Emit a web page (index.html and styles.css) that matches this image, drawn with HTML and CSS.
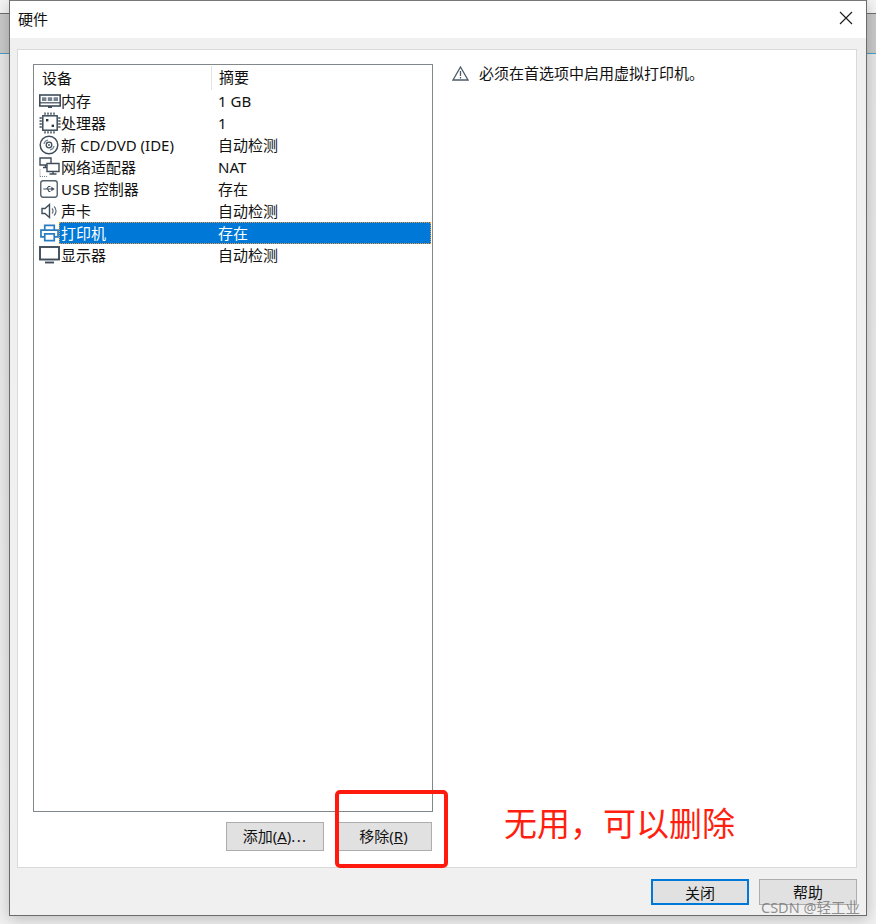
FILE: index.html
```html
<!DOCTYPE html>
<html lang="zh">
<head>
<meta charset="utf-8">
<title>硬件</title>
<link rel="stylesheet" href="styles.css">
</head>
<body>
<div class="window">
  <header class="titlebar">
    <span class="title">硬件</span>
    <svg class="close" width="14" height="14" viewBox="0 0 14 14"><path d="M1 1 L13 13 M13 1 L1 13" stroke="#1a1a1a" stroke-width="1.1" fill="none"/></svg>
  </header>
  <main class="body">
    <section class="panel">
      <div class="left">
        <div class="list">
          <div class="list-head">
            <span class="head-a">设备</span>
            <span class="head-b">摘要</span>
          </div>
          <div class="row">
            <svg class="ico" width="22" height="16" viewBox="0 0 22 16"><rect x="0.800" y="2" width="20.400" height="11" fill="none" stroke="#3f4d5a" stroke-width="1.600"/><path d="M1 9.800h20" stroke="#3f4d5a" stroke-width="1.200"/><path d="M3 4.200h4.400v3.800H3zM8.800 4.200h4.400v3.800H8.800zM14.600 4.200H19v3.800h-4.400z" fill="#75828d"/><path d="M9 13h4v2H9z" fill="#3f4d5a"/></svg>
            <div class="cells"><span class="c1">内存</span><span class="c2">1 GB</span></div>
          </div>
          <div class="row">
            <svg class="ico" width="22" height="22" viewBox="0 0 22 22"><rect x="3.800" y="3.800" width="14.400" height="14.400" fill="none" stroke="#3f4d5a" stroke-width="1.500"/><path d="M6 0.500v2.300M9 0.500v2.300M12 0.500v2.300M15 0.500v2.300M6 19.200v2.300M9 19.200v2.300M12 19.200v2.300M15 19.200v2.300M0.500 6h2.300M0.500 9h2.300M0.500 12h2.300M0.500 15h2.300M19.200 6h2.300M19.200 9h2.300M19.200 12h2.300M19.200 15h2.300" stroke="#3f4d5a" stroke-width="1.400"/><rect x="7" y="7" width="2.400" height="2.400" fill="#2a3742"/><rect x="12.600" y="12.600" width="2.400" height="2.400" fill="#2a3742"/></svg>
            <div class="cells"><span class="c1">处理器</span><span class="c2">1</span></div>
          </div>
          <div class="row">
            <svg class="ico" width="20" height="20" viewBox="0 0 20 20"><g fill="none" stroke="#3f4d5a"><circle cx="10" cy="10" r="8.800" stroke-width="1.500"/><circle cx="10" cy="10" r="2.800" stroke-width="1.300"/><path d="M5 9a5 5 0 0 1 4-4M15 11a5 5 0 0 1-4 4" stroke="#75828d" stroke-width="1.200"/></g><circle cx="10" cy="10" r="0.900" fill="#3f4d5a"/></svg>
            <div class="cells"><span class="c1">新 CD/DVD (IDE)</span><span class="c2">自动检测</span></div>
          </div>
          <div class="row">
            <svg class="ico" width="21" height="21" viewBox="0 0 21 21"><g fill="none" stroke="#3f4d5a" stroke-width="1.400"><path d="M1 1.500h11v7H1zM6.500 8.500v2M4 11h5"/><path d="M8 7h12v8H8z" fill="#fff"/><path d="M14 15v2M10.500 17.500h7"/></g><path d="M1 13v7M1 20h8" stroke="#75828d" stroke-dasharray="1 1" fill="none"/></svg>
            <div class="cells"><span class="c1">网络适配器</span><span class="c2">NAT</span></div>
          </div>
          <div class="row">
            <svg class="ico ico-usb" width="18" height="18" viewBox="0 0 19 19"><rect x="0.800" y="0.800" width="17.400" height="17.400" rx="2.500" fill="none" stroke="#55636f" stroke-width="1.500"/><path d="M3.500 9.500h11M14.500 9.500l-2-1.300v2.600zM7 9.500l2-2.700h2M8 9.500l1.500 2.700H11" stroke="#3f4d5a" stroke-width="1.100" fill="none"/></svg>
            <div class="cells"><span class="c1">USB 控制器</span><span class="c2">存在</span></div>
          </div>
          <div class="row">
            <svg class="ico ico-snd" width="16" height="16" viewBox="0 0 16 16"><path d="M1 5.500h3L8.500 1.500v13L4 10.500H1z" fill="none" stroke="#3f4d5a" stroke-width="1.400"/><path d="M11 5.500a3.500 3.500 0 0 1 0 5M13 3.500a6 6 0 0 1 0 9" fill="none" stroke="#5c6a76" stroke-width="1.200"/></svg>
            <div class="cells"><span class="c1">声卡</span><span class="c2">自动检测</span></div>
          </div>
          <div class="row">
            <svg class="ico ico-usb" width="19" height="18" viewBox="0 0 20 18"><g fill="none" stroke="#2a7cc2" stroke-width="1.800"><path d="M5 6V1h10v5"/><path d="M5 13H1V6h18v7h-4"/><path d="M5 10h10v7H5z"/></g></svg>
            <div class="cells selected"><span class="c1">打印机</span><span class="c2">存在</span></div>
          </div>
          <div class="row">
            <svg class="ico" width="21" height="18" viewBox="0 0 21 18"><rect x="1" y="1" width="19" height="12.500" fill="none" stroke="#3f4d5a" stroke-width="1.900"/><path d="M6 16.500h9" stroke="#3f4d5a" stroke-width="1.900"/></svg>
            <div class="cells"><span class="c1">显示器</span><span class="c2">自动检测</span></div>
          </div>
        </div>
        <div class="list-actions">
          <button class="btn btn-add" type="button">添加(<u>A</u>)<span class="dots">...</span></button>
          <button class="btn btn-remove" type="button">移除(<u>R</u>)</button>
        </div>
      </div>
      <div class="right">
        <svg class="warn" width="17" height="15" viewBox="0 0 17 15"><path d="M8.500 1 L16 14 H1 Z" fill="none" stroke="#4d5b68" stroke-width="1.300"/><path d="M8.500 5v5M8.500 11v1.600" stroke="#4d5b68" stroke-width="1.300"/></svg>
        <span class="msg">必须在首选项中启用虚拟打印机。</span>
      </div>
    </section>
    <footer class="footer">
      <button class="btn btn-close" type="button">关闭</button>
      <button class="btn btn-help" type="button">帮助</button>
    </footer>
  </main>
</div>
<div class="note-box"></div>
<div class="note-text">无用，可以删除</div>
<div class="watermark">CSDN @轻工业</div>
</body>
</html>
```
FILE: styles.css
```css
* { box-sizing: border-box; }
html, body { margin: 0; padding: 0; }
body {
  position: relative;
  width: 876px;
  height: 924px;
  overflow: hidden;
  font-family: "Noto Sans", "Noto Sans CJK SC", sans-serif;
  font-size: 15px;
  color: #111;
  background: linear-gradient(to bottom, #f4f4f4 0, #f4f4f4 13px, #6f6f6f 13px, #6f6f6f 14px, #c9c9c9 14px, #c9c9c9 53px, #4b9cc0 53px, #4b9cc0 54px, #e6e6e6 54px, #f0f0f0 100%);
}
.window {
  margin-left: 9px;
  width: 858px;
  height: 916px;
  background: #fff;
  border: 1px solid #6b6b6b;
  border-top-color: #777;
  box-shadow: 0 3px 14px rgba(0,0,0,.22);
  display: flex;
  flex-direction: column;
}
.titlebar {
  height: 37px;
  flex: none;
  display: flex;
  align-items: center;
  justify-content: space-between;
  padding: 0 13px 3px 8px;
  background: #fff;
}
.title { line-height: 34px; padding-top: 2px; }
.body {
  flex: 1;
  background: #f0f0f0;
  padding: 11px 9px 0 7px;
  display: flex;
  flex-direction: column;
}
.panel {
  height: 819px;
  flex: none;
  background: #fff;
  border: 1px solid #d9d9d9;
  padding: 14px 0 0 15px;
  display: flex;
}
.left { width: 400px; flex: none; }
.list {
  height: 748px;
  border: 1px solid #82878c;
  background: #fff;
}
.list-head {
  height: 25px;
  display: flex;
  align-items: center;
  position: relative;
}
.head-a {
  width: 178px;
  padding-left: 8px;
  height: 24px;
  line-height: 24px;
  border-right: 1px solid #e3e3e3;
}
.head-b { padding: 0 0 1px 7px; line-height: 24px; }
.row {
  height: 22px;
  display: flex;
  align-items: center;
  position: relative;
  padding-left: 25px;
}
.ico { position: absolute; left: 5px; top: 50%; transform: translateY(-50%); }
.ico-snd { left: 7px; }
.ico-usb { left: 6px; }
.cells {
  flex: none;
  width: 372px;
  height: 22px;
  display: flex;
  align-items: center;
  padding: 0 0 1px 2px;
  line-height: 20px;
}
.c1 { width: 157px; flex: none; white-space: nowrap; }
.c2 { white-space: nowrap; }
.selected {
  background: #0078d7;
  color: #fff;
  border: 1px dotted #f59a3c;
  padding: 0 0 0 1px;
}
.list-actions {
  display: flex;
  justify-content: flex-end;
  gap: 11px;
  padding: 10px 1px 0 0;
}
.btn {
  height: 29px;
  width: 98px;
  padding: 0;
  margin: 0;
  background: #e1e1e1;
  border: 1px solid #adadad;
  font: inherit;
  color: #111;
  line-height: 27px;
}
.btn-remove { width: 97px; }
.dots { letter-spacing: 1.3px; }
.right {
  flex: 1;
  display: flex;
  align-items: flex-start;
  padding: 0 0 0 19px;
}
.warn { margin-top: 2px; flex: none; }
.msg { margin-left: 10px; line-height: 18px; }
.footer {
  display: flex;
  justify-content: flex-end;
  gap: 10px;
  padding: 11px 0 0 0;
}
.footer .btn { height: 26px; line-height: 24px; }
.btn-close { border: 2px solid #0078d7; }
.note-box {
  position: absolute;
  left: 335px;
  top: 790px;
  width: 113px;
  height: 78px;
  border: 4px solid #ff1a0d;
  border-radius: 5px;
}
.note-text {
  position: absolute;
  left: 504px;
  top: 802px;
  font-size: 33px;
  line-height: 44px;
  color: #ff1f10;
  white-space: nowrap;
}
.watermark {
  position: absolute;
  left: 761px;
  top: 897px;
  font-size: 14.500px;
  line-height: 20px;
  color: rgba(110,110,110,.75);
  white-space: nowrap;
}
```
